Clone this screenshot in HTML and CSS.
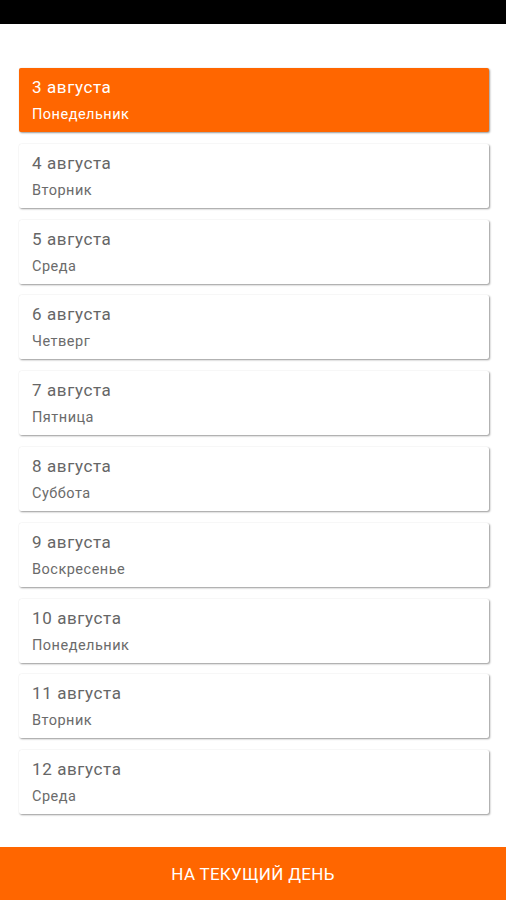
FILE: index.html
```html
<!DOCTYPE html>
<html>
<head>
	<meta charset="utf-8">
	<title>Календарь</title>
	<link rel="stylesheet" href="styles.css">
</head>
<body>
	<div class="statusbar"></div>

	<div class="days">
		<div class="day active">
			<div class="date">3 августа</div>
			<div class="weekday">Понедельник</div>
		</div>
		<div class="day">
			<div class="date">4 августа</div>
			<div class="weekday">Вторник</div>
		</div>
		<div class="day">
			<div class="date">5 августа</div>
			<div class="weekday">Среда</div>
		</div>
		<div class="day">
			<div class="date">6 августа</div>
			<div class="weekday">Четверг</div>
		</div>
		<div class="day">
			<div class="date">7 августа</div>
			<div class="weekday">Пятница</div>
		</div>
		<div class="day">
			<div class="date">8 августа</div>
			<div class="weekday">Суббота</div>
		</div>
		<div class="day">
			<div class="date">9 августа</div>
			<div class="weekday">Воскресенье</div>
		</div>
		<div class="day">
			<div class="date">10 августа</div>
			<div class="weekday">Понедельник</div>
		</div>
		<div class="day">
			<div class="date">11 августа</div>
			<div class="weekday">Вторник</div>
		</div>
		<div class="day">
			<div class="date">12 августа</div>
			<div class="weekday">Среда</div>
		</div>
	</div>

	<button class="today">На текущий день</button>
</body>
</html>
```

FILE: styles.css
```css
html, body {
	margin: 0;
	height: 100%;
}

body {
	font-family: Roboto, "Noto Sans", sans-serif;
	background-color: #fff;
	display: flex;
	flex-direction: column;
}

.statusbar {
	height: 24px;
	background-color: #000;
	flex-shrink: 0;
}

.days {
	flex: 1;
	display: flex;
	flex-direction: column;
	gap: 11.8px;
	padding: 44px 17px 0 19px;
}

.day {
	height: 64px;
	box-sizing: border-box;
	padding: 8px 13px 0;
	background-color: #fff;
	border-radius: 2px;
	box-shadow: 1px 1px 2px rgba(0, 0, 0, 0.4), 0 0 1px rgba(0, 0, 0, 0.12);
	color: #6b6b6b;
}

.date {
	font-size: 17px;
	line-height: 22px;
	letter-spacing: 0.6px;
	color: #666;
}

.weekday {
	font-size: 14.5px;
	line-height: 22px;
	letter-spacing: 0.5px;
	margin-top: 6px;
}

.day.active {
	background-color: #ff6600;
	color: #fff;
}

.day.active .date {
	color: #fff;
}

.today {
	height: 53px;
	flex-shrink: 0;
	border: none;
	background-color: #ff6600;
	color: #fff;
	font-family: Roboto, "Noto Sans", sans-serif;
	font-size: 17px;
	letter-spacing: 0.3px;
	text-transform: uppercase;
	padding: 0;
}
```
